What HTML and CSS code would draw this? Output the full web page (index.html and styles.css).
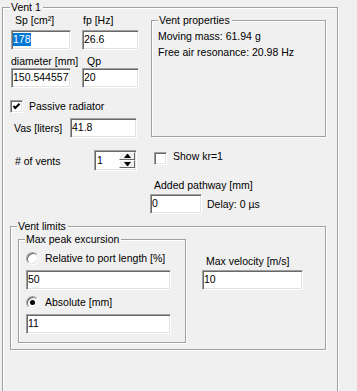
FILE: index.html
```html
<!DOCTYPE html>
<html lang="en">
<head>
  <meta charset="UTF-8">
  <title>Vent 1</title>
  <link rel="stylesheet" href="styles.css">
</head>
<body>

  <div class="group vent">
    <span class="legend">Vent 1</span>

    <div class="top">
      <div class="params">
        <div class="pair labels">
          <span class="lab-sp">Sp [cm²]</span>
          <span class="lab-fp">fp [Hz]</span>
        </div>
        <div class="pair row-a">
          <div class="edit w60"><span class="sel">178</span></div>
          <div class="edit w57">26.6</div>
        </div>
        <div class="pair labels row-b">
          <span>diameter [mm]</span>
          <span class="lab-qp">Qp</span>
        </div>
        <div class="pair">
          <div class="edit w60">150.544557</div>
          <div class="edit w57">20</div>
        </div>
        <div class="check passive">
          <span class="box">
            <svg width="11" height="11" viewBox="0 0 11 11"><polyline points="2.5,5 4.3,7 8.5,2.8" fill="none" stroke="#000" stroke-width="2"/></svg>
          </span>
          <span>Passive radiator</span>
        </div>
        <div class="vas">
          <span class="vas-label">Vas [liters]</span>
          <div class="edit w67">41.8</div>
        </div>
      </div>

      <div class="group props">
        <span class="legend">Vent properties</span>
        <p>Moving mass: 61.94 g</p>
        <p>Free air resonance: 20.98 Hz</p>
      </div>
    </div>

    <div class="vents">
      <span class="vents-label"># of vents</span>
      <div class="edit spin">
        <span class="spin-text">1</span>
        <span class="arrows">
          <span class="arrow"><i class="up"></i></span>
          <span class="arrow"><i class="down"></i></span>
        </span>
      </div>
      <div class="check kr">
        <span class="box"></span>
        <span class="kr-text">Show kr=1</span>
      </div>
    </div>

    <div class="pathway">
      <div class="pathway-label">Added pathway [mm]</div>
      <div class="pathway-row">
        <div class="edit w52">0</div>
        <span class="delay">Delay: 0 µs</span>
      </div>
    </div>

    <div class="group limits">
      <span class="legend">Vent limits</span>
      <div class="limits-body">
        <div class="group excursion">
          <span class="legend">Max peak excursion</span>
          <div class="radio-row first">
            <span class="radio"></span>
            <span>Relative to port length [%]</span>
          </div>
          <div class="edit w145 gap">50</div>
          <div class="radio-row">
            <span class="radio on"></span>
            <span>Absolute [mm]</span>
          </div>
          <div class="edit w145 gap">11</div>
        </div>
        <div class="velocity">
          <div class="velocity-label">Max velocity [m/s]</div>
          <div class="edit w101">10</div>
        </div>
      </div>
    </div>
  </div>

</body>
</html>
```

FILE: styles.css
```css
body {
  margin: 0;
  background: #f0f0f0;
  font-family: "Liberation Sans", Arial, sans-serif;
  font-size: 10.5px;
  line-height: 13px;
  color: #000;
  overflow: hidden;
}
p {
  margin: 0 0 3px;
}
.group {
  position: relative;
  box-sizing: border-box;
  border: 1px solid #a0a0a0;
  box-shadow: inset 1px 1px #fff, 1px 1px #fff;
}
.legend {
  position: absolute;
  top: -7px;
  left: 6px;
  padding: 0 2px 0 1px;
  background: #f0f0f0;
  white-space: nowrap;
}
.vent {
  margin: 7px 0 0 2px;
  width: 336px;
  height: 400px;
  padding: 6px 0 0 8px;
}
.vent > .legend {
  left: 7px;
}

/* top block */
.top {
  display: flex;
  align-items: flex-start;
}
.params {
  width: 128px;
}
.pair {
  display: grid;
  grid-template-columns: 71px 57px;
}
.labels {
  height: 13px;
}
.lab-sp { padding-left: 4px; }
.lab-fp { padding-left: 1px; }
.lab-qp { padding-left: 5px; }
.row-a { margin-top: 3px; }
.row-b { margin-top: 5px; }
.props {
  margin: 6px 0 0 12px;
  width: 175px;
  height: 117px;
  padding: 9px 0 0 6px;
}

/* edit boxes */
.edit {
  box-sizing: border-box;
  height: 20px;
  padding: 2px 1px 0;
  background: #fff;
  border: 1px solid;
  border-color: #a0a0a0 #fff #fff #a0a0a0;
  box-shadow: inset 1px 1px #696969, inset -1px -1px #e3e3e3;
  white-space: nowrap;
  overflow: hidden;
}
.sel {
  display: inline-block;
  background: #0078d7;
  color: #fff;
}
.w52 { width: 52px; }
.w57 { width: 57px; }
.w60 { width: 60px; }
.w67 { width: 67px; }
.w101 { width: 101px; }
.w145 { width: 145px; }

/* check boxes and radios */
.check {
  display: flex;
  align-items: center;
}
.box {
  box-sizing: border-box;
  width: 13px;
  height: 13px;
  flex: none;
  padding: 1px;
  background: #fff;
  border: 1px solid;
  border-color: #a0a0a0 #fff #fff #a0a0a0;
  box-shadow: inset 1px 1px #696969, inset -1px -1px #e3e3e3;
}
.box svg {
  display: block;
  margin: -1px 0 0 -1px;
}
.check .box + span {
  margin-left: 6px;
}
.passive {
  margin: 12px 0 0 -1px;
}
.vas {
  display: flex;
  align-items: center;
  margin-top: 5px;
}
.vas-label {
  width: 56px;
  padding-left: 3px;
}

/* # of vents row */
.vents {
  display: flex;
  align-items: flex-start;
  margin-top: 12px;
  height: 21px;
}
.vents-label {
  width: 79px;
  margin-left: 4px;
  padding-top: 5px;
}
.spin {
  display: flex;
  width: 43px;
  height: 21px;
  padding: 1px;
}
.spin-text {
  padding: 2px 0 0 1px;
}
.arrows {
  margin-left: auto;
  width: 16px;
  display: flex;
  flex-direction: column;
}
.arrow {
  box-sizing: border-box;
  height: 8px;
  display: flex;
  align-items: center;
  justify-content: center;
  background: #f0f0f0;
  border: 1px solid;
  border-color: #fff #696969 #696969 #fff;
}
.arrow i {
  width: 1px;
  height: 0;
  border-left: 3px solid transparent;
  border-right: 3px solid transparent;
}
.arrow .up { border-bottom: 4px solid #000; }
.arrow .down { border-top: 4px solid #000; }
.kr {
  margin-left: 17px;
  align-items: flex-start;
}
.kr .box {
  margin-top: 2px;
}

/* added pathway */
.pathway {
  margin-left: 139px;
}
.pathway-label {
  margin-top: 8px;
  padding-left: 4px;
}
.pathway-row {
  display: flex;
  align-items: center;
  margin-top: 2px;
}
.delay {
  margin-left: 5px;
}

/* vent limits */
.limits {
  margin: 12px 0 0 -1px;
  width: 316px;
  height: 124px;
}
.limits-body {
  display: flex;
  align-items: flex-start;
  padding: 12px 0 0 7px;
}
.excursion {
  width: 168px;
  height: 104px;
  padding-left: 7px;
}
.radio-row {
  display: flex;
  align-items: center;
  margin-top: 6px;
}
.radio-row.first {
  margin-top: 12px;
}
.radio {
  position: relative;
  box-sizing: border-box;
  width: 13px;
  height: 13px;
  margin-right: 6px;
  border-radius: 50%;
  background: #fff;
  border: 1px solid;
  border-color: #a0a0a0 #fff #fff #a0a0a0;
  box-shadow: inset 1px 1px #696969, inset -1px -1px #e3e3e3;
}
.radio.on::after {
  content: "";
  position: absolute;
  left: 3px;
  top: 3px;
  width: 5px;
  height: 5px;
  border-radius: 50%;
  background: #000;
}
.gap {
  margin-top: 5px;
}
.velocity {
  margin: 16px 0 0 16px;
}
.velocity-label {
  padding-left: 4px;
  margin-bottom: 2px;
}
```
